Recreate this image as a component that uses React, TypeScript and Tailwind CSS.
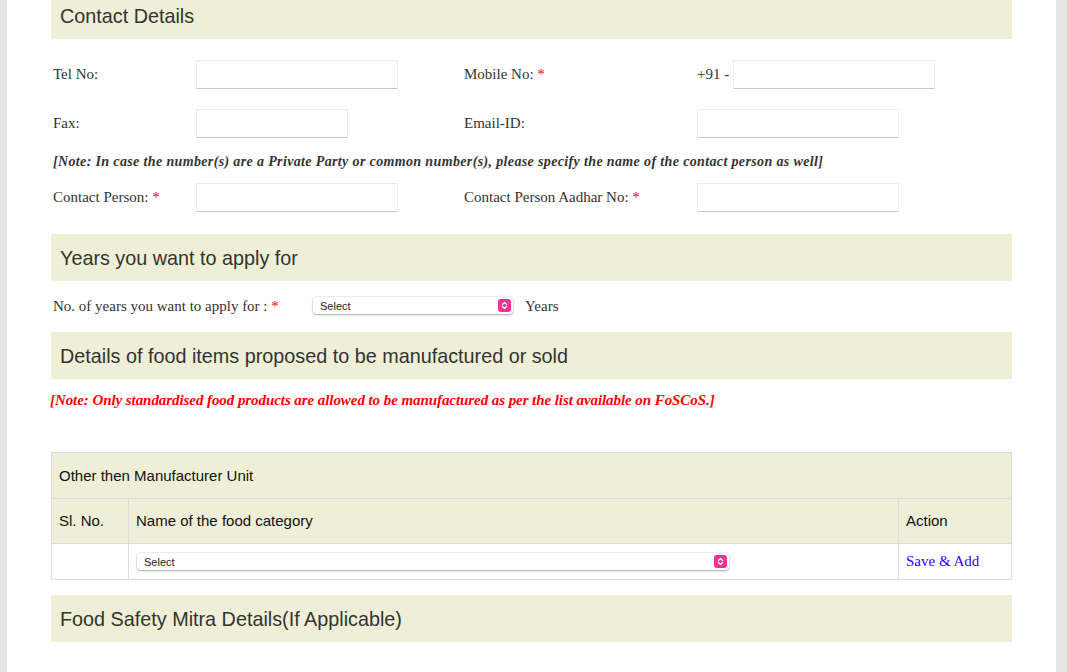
import React from "react";

const serif = { fontFamily: '"Liberation Serif", "Times New Roman", serif' };

function Star() {
  return <span className="text-[#ff0000]"> *</span>;
}

function Input({ w }: { w: string }) {
  return (
    <div
      className={`${w} h-[29px] bg-white border border-[#ececec] border-b-[#c9c9c9] rounded-[1px]`}
    />
  );
}

function SelectBox({ w }: { w: string }) {
  return (
    <div
      className={`${w} h-[17px] relative bg-white rounded-[4px] shadow-[0_0_0_1px_rgba(0,0,0,0.06),0_1px_2px_rgba(0,0,0,0.3)] flex items-center`}
    >
      <span
        className="pl-[7px] text-[11px] text-[#222] leading-none pt-[2px]"
        style={{ fontFamily: '"Liberation Sans", Arial, sans-serif' }}
      >
        Select
      </span>
      <div className="absolute right-[2px] top-[2px] w-[13px] h-[13px] rounded-[3px] bg-[#fd3194] flex items-center justify-center">
        <svg width="7" height="9" viewBox="0 0 7 9" fill="none">
          <path d="M1.5 3.5 L3.5 1.5 L5.5 3.5" stroke="white" strokeWidth="1.2" strokeLinecap="round" strokeLinejoin="round" />
          <path d="M1.5 5.5 L3.5 7.5 L5.5 5.5" stroke="white" strokeWidth="1.2" strokeLinecap="round" strokeLinejoin="round" />
        </svg>
      </div>
    </div>
  );
}

function SectionHeader({ children, className = "" }: { children: React.ReactNode; className?: string }) {
  return (
    <div
      className={`h-[47px] bg-[#efefd7] flex items-center pl-[9px] pt-[2px] text-[19.8px] text-[#333] ${className}`}
      style={{ fontFamily: '"Liberation Sans", Arial, Helvetica, sans-serif' }}
    >
      {children}
    </div>
  );
}

export default function App() {
  return (
    <div className="w-[1067px] h-[672px] overflow-hidden bg-[#e4e4e4] pl-[7px] pr-[11px]">
      <div className="h-full bg-white px-[44px] flow-root">
        <SectionHeader className="-mt-[8px]">Contact Details</SectionHeader>

        <div className="text-[15px] text-[#333]" style={serif}>
          {/* Row 1 */}
          <div className="mt-[21px] h-[29px] flex items-center">
            <div className="w-[145px] pl-[2px]">Tel No:</div>
            <div className="w-[268px]">
              <Input w="w-[202px]" />
            </div>
            <div className="w-[233px]">
              Mobile No:<Star />
            </div>
            <div className="flex items-center">
              <span className="w-[36px]">+91 -</span>
              <Input w="w-[202px]" />
            </div>
          </div>

          {/* Row 2 */}
          <div className="mt-[20px] h-[29px] flex items-center">
            <div className="w-[145px] pl-[2px]">Fax:</div>
            <div className="w-[268px]">
              <Input w="w-[152px]" />
            </div>
            <div className="w-[233px]">Email-ID:</div>
            <div>
              <Input w="w-[202px]" />
            </div>
          </div>

          {/* Note */}
          <div className="h-[45px] flex items-center pl-[2px] pt-[1px] font-bold italic text-[14px] tracking-[0.36px] whitespace-nowrap">
            [Note: In case the number(s) are a Private Party or common number(s), please specify the name of the contact person as well]
          </div>

          {/* Row 3 */}
          <div className="h-[29px] flex items-center">
            <div className="w-[145px] pl-[2px]">
              Contact Person:<Star />
            </div>
            <div className="w-[268px]">
              <Input w="w-[202px]" />
            </div>
            <div className="w-[233px]">
              Contact Person Aadhar No:<Star />
            </div>
            <div>
              <Input w="w-[202px]" />
            </div>
          </div>
        </div>

        <SectionHeader className="mt-[22px]">Years you want to apply for</SectionHeader>

        <div className="h-[51px] flex items-center text-[15px] text-[#333] pb-[1px]" style={serif}>
          <div className="w-[262px] pl-[2px]">
            No. of years you want to apply for :<Star />
          </div>
          <div className="-mt-[1px]">
            <SelectBox w="w-[200px]" />
          </div>
          <span className="ml-[12px]">Years</span>
        </div>

        <SectionHeader>Details of food items proposed to be manufactured or sold</SectionHeader>

        <div className="h-[73px] pt-[12px]">
          <div
            className="leading-[18px] text-[15px] font-bold italic text-[#ff0000] -ml-[1px] tracking-[-0.07px] whitespace-nowrap"
            style={serif}
          >
            [Note: Only standardised food products are allowed to be manufactured as per the list available on FoSCoS.]
          </div>
        </div>

        {/* Table */}
        <div
          className="border border-[#dcdcdc] text-[15px] text-[#111]"
          style={{ fontFamily: '"Liberation Sans", Arial, Helvetica, sans-serif' }}
        >
          <div className="h-[46px] bg-[#efefd7] flex items-center pl-[7px] pt-[1px] border-b border-[#dcdcdc]">
            Other then Manufacturer Unit
          </div>
          <div className="h-[45px] bg-[#efefd7] flex border-b border-[#dcdcdc]">
            <div className="w-[77px] flex items-center pl-[7px] pt-[1px] border-r border-[#dcdcdc]">Sl. No.</div>
            <div className="flex-1 flex items-center pl-[7px] pt-[1px] border-r border-[#dcdcdc]">Name of the food category</div>
            <div className="w-[112px] flex items-center pl-[7px] pt-[1px]">Action</div>
          </div>
          <div className="h-[35px] bg-white flex">
            <div className="w-[77px] border-r border-[#dcdcdc]" />
            <div className="flex-1 flex items-center pl-[8px] border-r border-[#dcdcdc]">
              <SelectBox w="w-[592px]" />
            </div>
            <div className="w-[112px] flex items-center pl-[7px]">
              <span className="text-[15px] text-[#3300ff]" style={serif}>
                Save &amp; Add
              </span>
            </div>
          </div>
        </div>

        <SectionHeader className="mt-[15px]">Food Safety Mitra Details(If Applicable)</SectionHeader>
      </div>
    </div>
  );
}
